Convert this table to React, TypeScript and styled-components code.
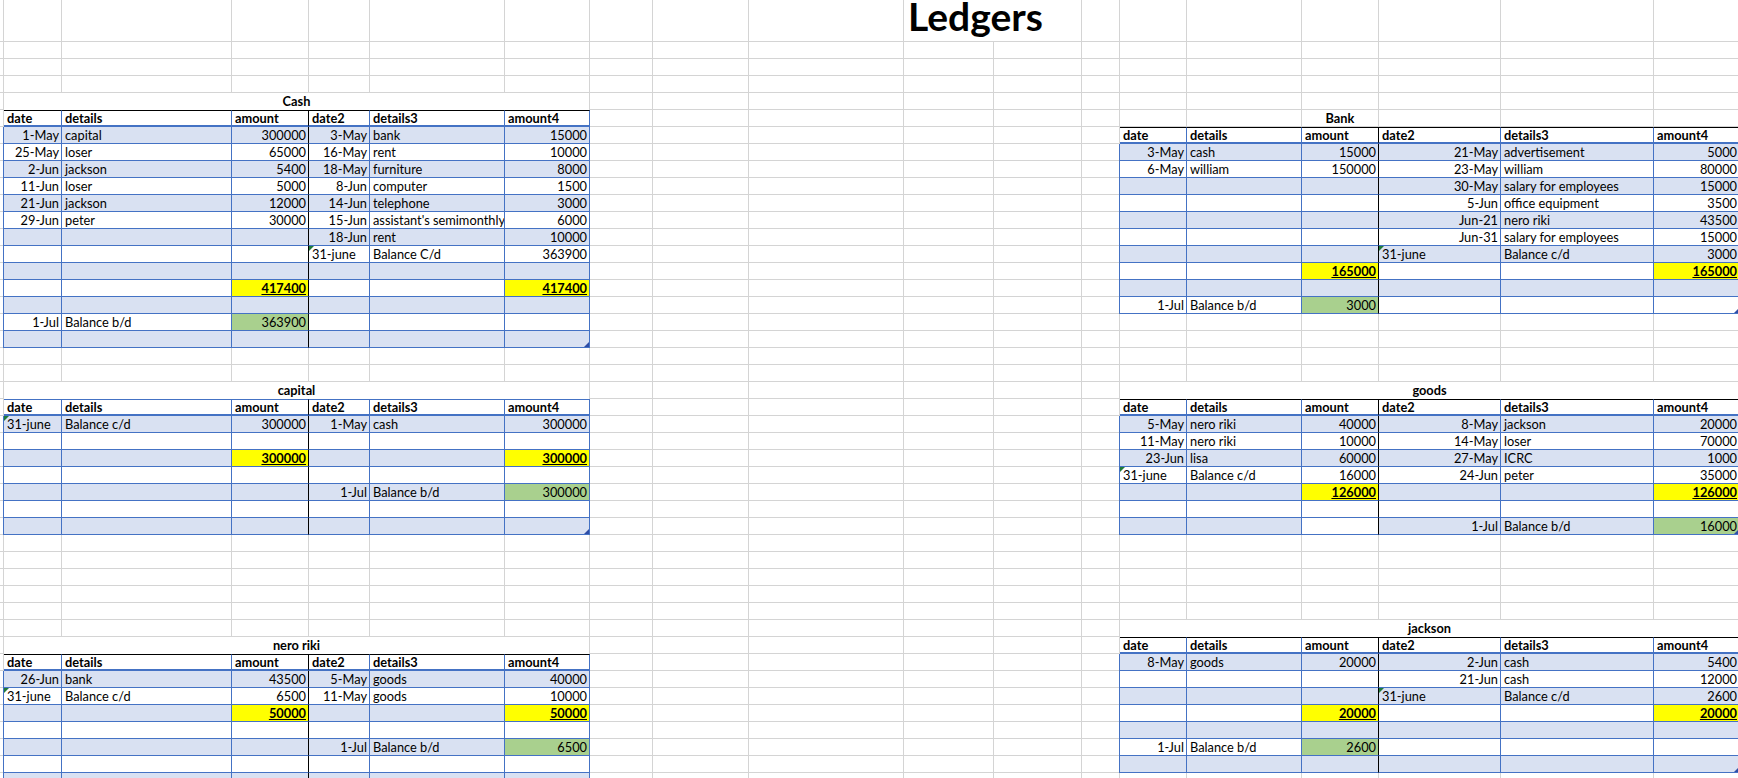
import React from 'react';
import styled, { createGlobalStyle, css } from 'styled-components';

const GRID = '#d4d4d4';
const BLUE = '#4472c4';
const BAND = '#d9e1f2';
const YELLOW = '#ffff00';
const GREEN = '#a9d08e';

// sheet column widths, px (col 1 is the sliver left of the tables)
const COLS = [4, 58, 170, 77, 61, 135, 85, 63, 96, 155, 90, 88, 38, 67, 115, 77, 122, 153, 86];
const ROWS = 45;

const LEFT = '58px 170px 77px 61px 135px 85px';
const RIGHT = '67px 115px 77px 122px 153px 86px';
const HEAD = ['date', 'details', 'amount', 'date2', 'details3', 'amount4'];

const GlobalStyle = createGlobalStyle`
  html, body { margin: 0; padding: 0; background: #fff; overflow: hidden; }
  body { font-family: Lato, "Liberation Sans", sans-serif; color: #000; }
`;

const Sheet = styled.div`
  display: grid;
  grid-template-columns: ${COLS.map((w) => w + 'px').join(' ')};
  grid-template-rows: 42px repeat(${ROWS - 1}, 17px);
  width: 1738px;
  height: 778px;
  overflow: hidden;
  font-size: 12.8px;
`;

const Blank = styled.div`
  box-sizing: border-box;
  border-right: 1px solid ${GRID};
  border-bottom: 1px solid ${GRID};
`;

const SheetTitle = styled.div`
  grid-row: 1;
  grid-column: 11 / span 2;
  box-sizing: border-box;
  border-right: 1px solid ${GRID};
  border-bottom: 1px solid ${GRID};
  padding-left: 4px;
  font-size: 39px;
  font-weight: 700;
  line-height: 32px;
  white-space: nowrap;
`;

const TitleCell = styled.div<{ $row: number; $col: number; $span: number }>`
  grid-row: ${(p) => p.$row};
  grid-column: ${(p) => p.$col} / span ${(p) => p.$span};
  box-sizing: border-box;
  border-right: 1px solid ${GRID};
  border-bottom: ${(p) => (p.$span === 1 ? `1px solid ${GRID}` : 'none')};
  padding-top: 1px;
  line-height: 15px;
  text-align: center;
  font-weight: 700;
  white-space: nowrap;
`;

const Ledger = styled.div<{ $row: number; $col: number; $span: number; $cols: string }>`
  grid-row: ${(p) => p.$row} / span ${(p) => p.$span};
  grid-column: ${(p) => p.$col} / span 6;
  display: grid;
  grid-template-columns: ${(p) => p.$cols};
  grid-auto-rows: 17px;
`;

const HeadCell = styled.div<{ $top: string; $split: boolean; $first: boolean }>`
  box-sizing: border-box;
  height: 17px;
  padding: 0 2px 0 3px;
  line-height: 14px;
  font-weight: 700;
  white-space: nowrap;
  overflow: hidden;
  background: #fff;
  border-top: 1px solid ${(p) => p.$top};
  border-bottom: 2px solid ${BLUE};
  border-right: 1px solid ${(p) => (p.$split ? '#000' : BLUE)};
  ${(p) =>
    p.$first &&
    css`
      margin-left: -1px;
      border-left: 1px solid ${BLUE};
    `}
`;

const Cell = styled.div<{
  $bg: string;
  $split: boolean;
  $first: boolean;
  $align: string;
  $total: boolean;
  $flag: boolean;
  $handle: boolean;
}>`
  position: relative;
  box-sizing: border-box;
  height: 17px;
  padding: 1px 2px 0 3px;
  line-height: 15px;
  white-space: nowrap;
  overflow: hidden;
  text-align: ${(p) => p.$align};
  background: ${(p) => p.$bg};
  border-bottom: 1px solid ${BLUE};
  border-right: 1px solid ${(p) => (p.$split ? '#000' : BLUE)};
  ${(p) =>
    p.$first &&
    css`
      margin-left: -1px;
      border-left: 1px solid ${BLUE};
    `}
  ${(p) =>
    p.$total &&
    css`
      font-weight: 700;
      text-decoration: underline;
    `}
  ${(p) =>
    p.$flag &&
    css`
      &::before {
        content: '';
        position: absolute;
        left: 0;
        top: 0;
        border-top: 5px solid #1f7a3a;
        border-right: 5px solid transparent;
      }
    `}
  ${(p) =>
    p.$handle &&
    css`
      &::after {
        content: '';
        position: absolute;
        right: 0;
        bottom: 0;
        border-bottom: 5px solid #2e4da6;
        border-left: 5px solid transparent;
      }
    `}
`;

type Fill = 'total' | 'bd' | 'white';
type Val = string | { v: string; fill: Fill };

interface LedgerDef {
  title: string;
  titleRow: number;
  titleCol?: number;
  col: number;
  cols: string;
  top: string;
  handle: boolean;
  rows: Val[][];
}

const T = (v: string): Val => ({ v, fill: 'total' });
const G = (v: string): Val => ({ v, fill: 'bd' });
const E: Val[] = ['', '', '', '', '', ''];

const ledgers: LedgerDef[] = [
  {
    title: 'Cash',
    titleRow: 5,
    col: 2,
    cols: LEFT,
    top: '#000',
    handle: true,
    rows: [
      ['1-May', 'capital', '300000', '3-May', 'bank', '15000'],
      ['25-May', 'loser', '65000', '16-May', 'rent', '10000'],
      ['2-Jun', 'jackson', '5400', '18-May', 'furniture', '8000'],
      ['11-Jun', 'loser', '5000', '8-Jun', 'computer', '1500'],
      ['21-Jun', 'jackson', '12000', '14-Jun', 'telephone', '3000'],
      ['29-Jun', 'peter', '30000', '15-Jun', "assistant's semimonthly", '6000'],
      ['', '', '', '18-Jun', 'rent', '10000'],
      ['', '', '', '31-june', 'Balance C/d', '363900'],
      E,
      ['', '', T('417400'), '', '', T('417400')],
      E,
      ['1-Jul', 'Balance b/d', G('363900'), '', '', ''],
      E,
    ],
  },
  {
    title: 'capital',
    titleRow: 22,
    col: 2,
    cols: LEFT,
    top: BLUE,
    handle: true,
    rows: [
      ['31-june', 'Balance c/d', '300000', '1-May', 'cash', '300000'],
      E,
      ['', '', T('300000'), '', '', T('300000')],
      E,
      ['', '', '', '1-Jul', 'Balance b/d', G('300000')],
      E,
      E,
    ],
  },
  {
    title: 'nero riki',
    titleRow: 37,
    col: 2,
    cols: LEFT,
    top: '#000',
    handle: false,
    rows: [
      ['26-Jun', 'bank', '43500', '5-May', 'goods', '40000'],
      ['31-june', 'Balance c/d', '6500', '11-May', 'goods', '10000'],
      ['', '', T('50000'), '', '', T('50000')],
      E,
      ['', '', '', '1-Jul', 'Balance b/d', G('6500')],
      E,
      E,
    ],
  },
  {
    title: 'Bank',
    titleRow: 6,
    titleCol: 16,
    col: 14,
    cols: RIGHT,
    top: '#000',
    handle: true,
    rows: [
      ['3-May', 'cash', '15000', '21-May', 'advertisement', '5000'],
      ['6-May', 'william', '150000', '23-May', 'william', '80000'],
      ['', '', '', '30-May', 'salary for employees', '15000'],
      ['', '', '', '5-Jun', 'office equipment', '3500'],
      ['', '', '', 'Jun-21', 'nero riki', '43500'],
      ['', '', '', 'Jun-31', 'salary for employees', '15000'],
      ['', '', '', '31-june', 'Balance c/d', '3000'],
      ['', '', T('165000'), '', '', T('165000')],
      E,
      ['1-Jul', 'Balance b/d', G('3000'), '', '', ''],
    ],
  },
  {
    title: 'goods',
    titleRow: 22,
    col: 14,
    cols: RIGHT,
    top: '#000',
    handle: true,
    rows: [
      ['5-May', 'nero riki', '40000', '8-May', 'jackson', '20000'],
      ['11-May', 'nero riki', '10000', '14-May', 'loser', '70000'],
      ['23-Jun', 'lisa', '60000', '27-May', 'ICRC', '1000'],
      ['31-june', 'Balance c/d', '16000', '24-Jun', 'peter', '35000'],
      ['', '', T('126000'), '', '', T('126000')],
      E,
      ['', '', { v: '', fill: 'white' }, '1-Jul', 'Balance b/d', G('16000')],
    ],
  },
  {
    title: 'jackson',
    titleRow: 36,
    col: 14,
    cols: RIGHT,
    top: '#000',
    handle: true,
    rows: [
      ['8-May', 'goods', '20000', '2-Jun', 'cash', '5400'],
      ['', '', '', '21-Jun', 'cash', '12000'],
      ['', '', '', '31-june', 'Balance c/d', '2600'],
      ['', '', T('20000'), '', '', T('20000')],
      E,
      ['1-Jul', 'Balance b/d', G('2600'), '', '', ''],
      E,
    ],
  },
];

const fillColor = (fill: Fill | undefined, band: boolean) => {
  if (fill === 'total') return YELLOW;
  if (fill === 'bd') return GREEN;
  if (fill === 'white') return '#fff';
  return band ? BAND : '#fff';
};

const LedgerTable: React.FC<{ def: LedgerDef }> = ({ def }) => {
  const last = def.rows.length - 1;
  return (
    <>
      <TitleCell
        $row={def.titleRow}
        $col={def.titleCol ?? def.col}
        $span={def.titleCol ? 1 : 6}
      >
        {def.title}
      </TitleCell>
      <Ledger $row={def.titleRow + 1} $col={def.col} $span={def.rows.length + 1} $cols={def.cols}>
        {HEAD.map((h, i) => (
          <HeadCell key={h} $top={def.top} $split={i === 2} $first={i === 0}>
            {h}
          </HeadCell>
        ))}
        {def.rows.map((row, ri) =>
          row.map((val, ci) => {
            const text = typeof val === 'string' ? val : val.v;
            const fill = typeof val === 'string' ? undefined : val.fill;
            const isText = text === '31-june';
            return (
              <Cell
                key={ri + '-' + ci}
                $bg={fillColor(fill, ri % 2 === 0)}
                $split={ci === 2}
                $first={ci === 0}
                $align={ci % 3 === 1 || isText ? 'left' : 'right'}
                $total={fill === 'total'}
                $flag={isText}
                $handle={def.handle && ri === last && ci === 5}
              >
                {text}
              </Cell>
            );
          })
        )}
      </Ledger>
    </>
  );
};

export default function App() {
  const used =
    2 +
    ledgers.reduce((n, d) => n + (d.titleCol ? 1 : 6) + (d.rows.length + 1) * 6, 0);
  const blanks = COLS.length * ROWS - used;

  return (
    <>
      <GlobalStyle />
      <Sheet>
        <SheetTitle>Ledgers</SheetTitle>
        {ledgers.map((d) => (
          <LedgerTable key={d.title} def={d} />
        ))}
        {Array.from({ length: blanks }, (_, i) => (
          <Blank key={i} />
        ))}
      </Sheet>
    </>
  );
}
